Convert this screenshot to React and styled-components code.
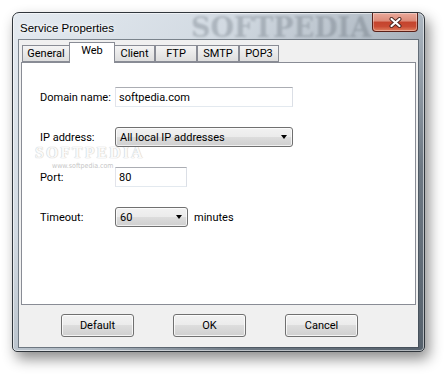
import React from "react";
import styled, { createGlobalStyle } from "styled-components";

const Global = createGlobalStyle`
  html, body {
    margin: 0;
    background: #fff;
  }
  body {
    font-family: Roboto, "Liberation Sans", sans-serif;
  }
`;

const Page = styled.div`
  width: 446px;
  height: 375px;
  padding: 12px 0 0 12px;
  box-sizing: border-box;
  overflow: hidden;
`;

const Window = styled.div`
  width: 413px;
  height: 340px;
  box-sizing: border-box;
  border: 1px solid #30363c;
  border-radius: 7px 7px 5px 5px;
  padding: 0 6px 4px;
  display: flex;
  flex-direction: column;
  background: linear-gradient(
    135deg,
    #e4eaf0 0%,
    #d2dae2 30%,
    #acb6c0 55%,
    #6e7984 75%,
    #56616c 100%
  );
  box-shadow: inset 0 0 0 1px rgba(255, 255, 255, 0.55),
    4px 7px 14px rgba(0, 0, 0, 0.45);
`;

const TitleBar = styled.div`
  position: relative;
  height: 27px;
  flex-shrink: 0;
  display: flex;
  justify-content: space-between;
  align-items: flex-start;
`;

const Title = styled.span`
  margin: 8px 0 0 1px;
  font: 11.5px/14px "Liberation Sans", sans-serif;
  color: #000;
  text-shadow: 0 0 6px #fff, 0 0 3px #fff;
  position: relative;
  z-index: 1;
`;

const TitleMark = styled.span`
  position: absolute;
  left: 172px;
  top: 1px;
  font: bold 27px/27px "DejaVu Serif", serif;
  color: rgba(85, 95, 105, 0.3);
  filter: blur(1.2px);
  pointer-events: none;
`;

const CloseBtn = styled.div`
  width: 46px;
  height: 19px;
  box-sizing: border-box;
  border: 1px solid #5a2018;
  border-top: none;
  border-radius: 0 0 4px 4px;
  background: linear-gradient(
    #eaa99b 0%,
    #dc8a78 45%,
    #c4432d 50%,
    #c94b34 75%,
    #e0805f 100%
  );
  box-shadow: inset 0 0 0 1px rgba(255, 255, 255, 0.35);
  display: flex;
  align-items: center;
  justify-content: center;
  position: relative;
  z-index: 1;
`;

const Client = styled.div`
  flex: 1;
  background: #f0f0f0;
  display: flex;
  flex-direction: column;
  box-shadow: 0 0 0 1px rgba(60, 70, 80, 0.6);
`;

const TabRow = styled.div`
  height: 22px;
  flex-shrink: 0;
  display: flex;
  align-items: flex-end;
  padding-left: 3px;
`;

const Tab = styled.div`
  position: relative;
  box-sizing: border-box;
  width: ${(p) => p.w}px;
  height: ${(p) => (p.active ? 21 : 17)}px;
  margin: ${(p) => (p.active ? "0 -1px -1px" : "0")};
  border: 1px solid #898c95;
  border-bottom: ${(p) => (p.active ? "none" : "1px solid #898c95")};
  background: ${(p) =>
    p.active ? "#fff" : "linear-gradient(#f4f4f4, #e9e9e9 50%, #dedede)"};
  z-index: ${(p) => (p.active ? 2 : 1)};
  font-size: 11px;
  line-height: 13px;
  padding-top: 1px;
  text-align: center;
  color: #000;
`;

const Panel = styled.div`
  position: relative;
  height: 243px;
  box-sizing: border-box;
  margin: 0 2px;
  border: 1px solid #898c95;
  background: #fff;
  padding: 24px 0 0 18px;
`;

const Form = styled.div`
  position: relative;
  z-index: 1;
  display: grid;
  grid-template-columns: 75px max-content;
  grid-auto-rows: 20px;
  row-gap: 20px;
  align-items: center;
`;

const Label = styled.span`
  font-size: 11px;
  color: #000;
`;

const TextBox = styled.input`
  box-sizing: border-box;
  width: ${(p) => p.w}px;
  height: 20px;
  margin: 0;
  padding: 0 3px;
  border: 1px solid;
  border-color: #abadb3 #dbdfe6 #e3e9ef #e2e3ea;
  background: #fff;
  font: 11px Roboto, "Liberation Sans", sans-serif;
  color: #000;
  outline: none;
`;

const Combo = styled.div`
  box-sizing: border-box;
  width: ${(p) => p.w}px;
  height: 20px;
  border: 1px solid #707070;
  border-radius: 3px;
  background: linear-gradient(#f2f2f2 0%, #ebebeb 50%, #dddddd 50%, #cfcfcf 100%);
  box-shadow: inset 0 0 0 1px rgba(255, 255, 255, 0.7);
  display: flex;
  align-items: center;
  padding: 0 5px 0 4px;
  font-size: 11px;
  color: #000;
`;

const ComboText = styled.span`
  flex: 1;
`;

const Arrow = styled.span`
  width: 0;
  height: 0;
  border-left: 3.5px solid transparent;
  border-right: 3.5px solid transparent;
  border-top: 4px solid #000;
`;

const Inline = styled.div`
  display: flex;
  align-items: center;
  gap: 6px;
  font-size: 11px;
`;

const Mark = styled.span`
  position: absolute;
  z-index: 0;
  left: 13px;
  top: 84px;
  font: bold 16px/11px "Liberation Serif", serif;
  letter-spacing: 2px;
  color: #fafafa;
  text-shadow: 0 0 1px #c4c4c4, 0 0 1px #d0d0d0;
  pointer-events: none;
`;

const MarkUrl = styled.span`
  position: absolute;
  z-index: 0;
  left: 30px;
  top: 100px;
  font: 7px/7px "DejaVu Sans Condensed", "DejaVu Sans", sans-serif;
  color: #c6c6c6;
  pointer-events: none;
`;

const ButtonRow = styled.div`
  display: flex;
  gap: 39px;
  padding: 9px 0 0 42px;
`;

const Button = styled.button`
  box-sizing: border-box;
  width: 73px;
  height: 23px;
  padding: 0;
  border: 1px solid #707070;
  border-radius: 3px;
  background: linear-gradient(#f2f2f2 0%, #ebebeb 50%, #dddddd 50%, #cfcfcf 100%);
  box-shadow: inset 0 0 0 1px rgba(255, 255, 255, 0.75);
  font: 11px Roboto, "Liberation Sans", sans-serif;
  color: #000;
`;

const tabs = [
  { name: "General", w: 48 },
  { name: "Web", w: 46, active: true },
  { name: "Client", w: 41 },
  { name: "FTP", w: 42 },
  { name: "SMTP", w: 42 },
  { name: "POP3", w: 40 },
];

export default function App() {
  return (
    <Page>
      <Global />
      <Window>
        <TitleBar>
          <Title>Service Properties</Title>
          <TitleMark>SOFTPEDIA</TitleMark>
          <CloseBtn>
            <svg width="13" height="11" viewBox="0 0 13 11">
              <path d="M2.5 2 L10.5 9 M10.5 2 L2.5 9" stroke="#4a2520" strokeWidth="4" strokeLinecap="round" />
              <path d="M2.5 2 L10.5 9 M10.5 2 L2.5 9" stroke="#fff" strokeWidth="2.2" strokeLinecap="round" />
            </svg>
          </CloseBtn>
        </TitleBar>
        <Client>
          <TabRow>
            {tabs.map((t) => (
              <Tab key={t.name} w={t.w} active={t.active}>
                {t.name}
              </Tab>
            ))}
          </TabRow>
          <Panel>
            <Mark>SOFTPEDIA</Mark>
            <MarkUrl>www.softpedia.com</MarkUrl>
            <Form>
              <Label>Domain name:</Label>
              <TextBox w={178} defaultValue="softpedia.com" readOnly />
              <Label>IP address:</Label>
              <Combo w={178}>
                <ComboText>All local IP addresses</ComboText>
                <Arrow />
              </Combo>
              <Label>Port:</Label>
              <TextBox w={72} defaultValue="80" readOnly />
              <Label>Timeout:</Label>
              <Inline>
                <Combo w={73}>
                  <ComboText>60</ComboText>
                  <Arrow />
                </Combo>
                minutes
              </Inline>
            </Form>
          </Panel>
          <ButtonRow>
            <Button>Default</Button>
            <Button>OK</Button>
            <Button>Cancel</Button>
          </ButtonRow>
        </Client>
      </Window>
    </Page>
  );
}
